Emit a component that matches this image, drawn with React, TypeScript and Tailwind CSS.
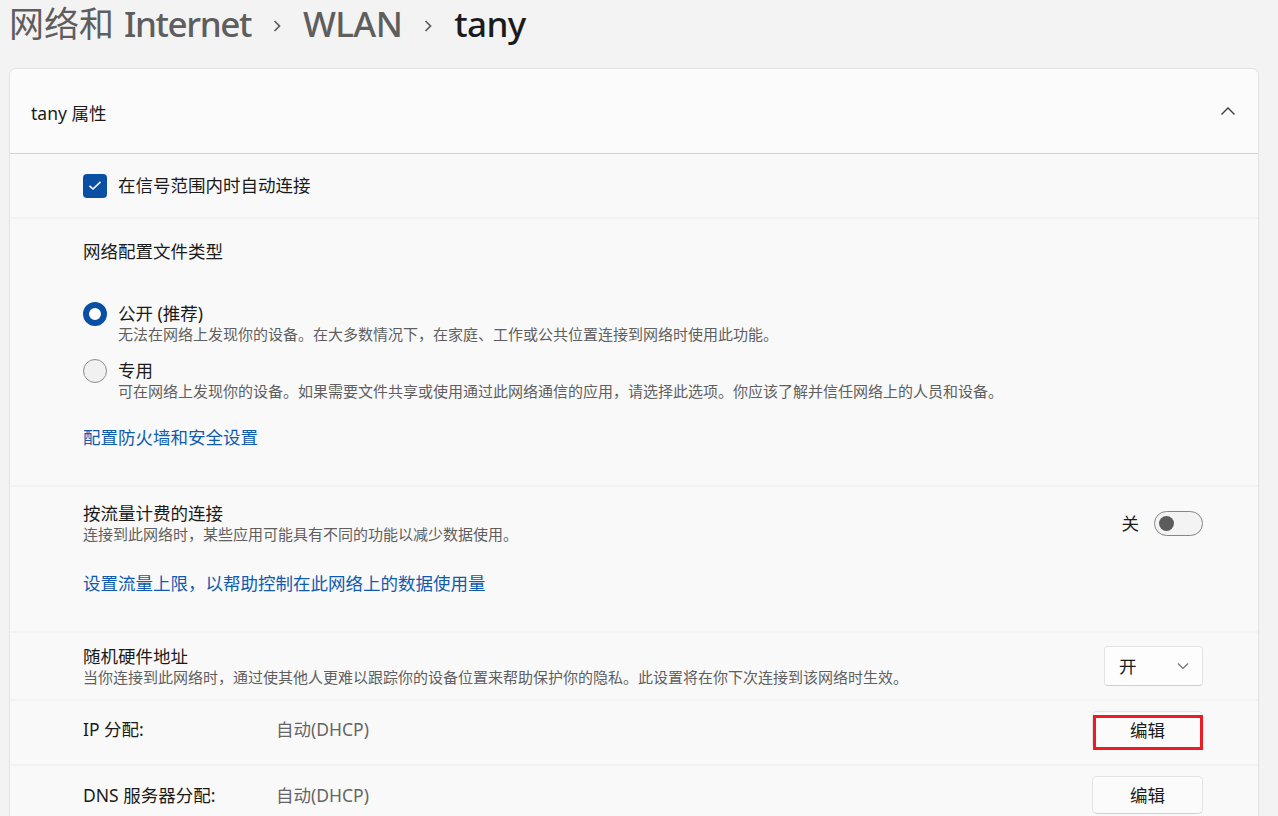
import React from "react";

const FONT = {
  fontFamily: '"Segoe UI", "Noto Sans", "Noto Sans CJK SC", sans-serif',
};

const Crumb = () => (
  <svg width="12" height="16" viewBox="0 0 12 16" className="mx-[20px] mt-[4px]">
    <path d="M3.5 3 L8.5 8 L3.5 13" fill="none" stroke="#5c5c5c" strokeWidth="1.7" />
  </svg>
);

const Row = ({
  className = "",
  children,
}: {
  className?: string;
  children?: React.ReactNode;
}) => (
  <div className={`bg-[#f9f9f9] pl-[73px] pr-[55px] ${className}`}>{children}</div>
);

const EditButton = ({ marked }: { marked?: boolean }) => (
  <div className="relative">
    <button className="w-[111px] h-[38px] rounded-[5px] border border-[#e3e3e3] border-b-[#d0d0d0] bg-[#fbfbfb] text-[17.5px] text-[#1b1b1b]">
      编辑
    </button>
    {marked && (
      <div className="absolute left-[1px] right-0 top-[4px] bottom-[-1px] border-[3px] border-[#ed1c24]" />
    )}
  </div>
);

export default function App() {
  return (
    <div
      style={FONT}
      className="w-[1278px] h-[816px] overflow-hidden bg-[#f3f3f3] text-[#1b1b1b]"
    >
      <div className="h-[68px] pl-[9px] flex items-start pt-[1px] text-[35px] leading-[46px] font-medium tracking-[-0.6px]">
        <span className="text-[#5e5e5e] font-normal tracking-normal">网络和</span>
        <span className="text-[#5e5e5e] ml-[10px] tracking-[-1.4px]">Internet</span>
        <div className="flex items-center h-[46px]">
          <Crumb />
        </div>
        <span className="text-[#5e5e5e]">WLAN</span>
        <div className="flex items-center h-[46px]">
          <Crumb />
        </div>
        <span className="text-[#1b1b1b]">tany</span>
      </div>

      <div className="ml-[9px] w-[1250px] border border-[#e2e2e2] rounded-t-[7px] overflow-hidden">
        <div className="h-[85px] pt-[4px] bg-[#fbfbfb] border-b border-[#d2d2d2] flex items-center justify-between pl-[21px] pr-[22px]">
          <span className="text-[17.5px]">tany 属性</span>
          <svg width="16" height="10" viewBox="0 0 16 10" className="mb-[4px]">
            <path d="M1.5 8.5 L8 2 L14.5 8.5" fill="none" stroke="#3a3a3a" strokeWidth="1.3" />
          </svg>
        </div>

        <div className="flex flex-col gap-[2px] bg-[#f3f3f3]">
          <Row className="h-[63px] flex items-center">
            <div className="w-[24px] h-[24px] rounded-[4px] bg-[#0b4fa4] flex items-center justify-center">
              <svg width="14" height="11" viewBox="0 0 14 11">
                <path d="M1.5 5.8 L5 9 L12.5 1.8" fill="none" stroke="#fff" strokeWidth="1.6" />
              </svg>
            </div>
            <span className="ml-[11px] text-[17.5px]">在信号范围内时自动连接</span>
          </Row>

          <Row className="h-[266px] pt-[20px]">
            <div className="text-[17.5px] leading-[24px]">网络配置文件类型</div>
            <div className="mt-[39px] flex">
              <div className="w-[24px] h-[24px] rounded-full border-[6px] border-[#0b4fa4] bg-white" />
              <div className="ml-[11px]">
                <div className="text-[17.5px] leading-[22px]">公开 (推荐)</div>
                <div className="text-[15px] leading-[20px] text-[#5f5f5f]">
                  无法在网络上发现你的设备。在大多数情况下，在家庭、工作或公共位置连接到网络时使用此功能。
                </div>
              </div>
            </div>
            <div className="mt-[15px] flex">
              <div className="w-[24px] h-[24px] rounded-full border border-[#8c8c8c] bg-[#f1f1f1]" />
              <div className="ml-[11px]">
                <div className="text-[17.5px] leading-[22px]">专用</div>
                <div className="text-[15px] leading-[20px] text-[#5f5f5f]">
                  可在网络上发现你的设备。如果需要文件共享或使用通过此网络通信的应用，请选择此选项。你应该了解并信任网络上的人员和设备。
                </div>
              </div>
            </div>
            <div className="mt-[25px] text-[17.5px] leading-[22px] text-[#0f5bb0]">
              配置防火墙和安全设置
            </div>
          </Row>

          <Row className="h-[144px] pt-[15px]">
            <div className="flex items-center justify-between">
              <div>
                <div className="text-[17.5px] leading-[22px]">按流量计费的连接</div>
                <div className="text-[15px] leading-[20px] text-[#5f5f5f]">
                  连接到此网络时，某些应用可能具有不同的功能以减少数据使用。
                </div>
              </div>
              <div className="flex items-center">
                <span className="text-[17.5px] mr-[15px]">关</span>
                <div className="w-[49px] h-[25px] rounded-full border border-[#858585] bg-[#f3f3f3] flex items-center pl-[4px]">
                  <div className="w-[15px] h-[15px] rounded-full bg-[#5c5c5c]" />
                </div>
              </div>
            </div>
            <div className="mt-[28px] text-[17.5px] leading-[22px] text-[#0f5bb0]">
              设置流量上限，以帮助控制在此网络上的数据使用量
            </div>
          </Row>

          <Row className="h-[66px] flex items-center justify-between">
            <div>
              <div className="text-[17.5px] leading-[22px]">随机硬件地址</div>
              <div className="text-[15px] leading-[20px] text-[#5f5f5f]">
                当你连接到此网络时，通过使其他人更难以跟踪你的设备位置来帮助保护你的隐私。此设置将在你下次连接到该网络时生效。
              </div>
            </div>
            <div className="w-[99px] h-[40px] rounded-[4px] border border-[#e3e3e3] border-b-[#cfcfcf] bg-[#fdfdfd] flex items-center justify-between pl-[14px] pr-[13px]">
              <span className="text-[17.5px]">开</span>
              <svg width="12" height="8" viewBox="0 0 12 8">
                <path d="M1 1.5 L6 6.5 L11 1.5" fill="none" stroke="#6a6a6a" strokeWidth="1.1" />
              </svg>
            </div>
          </Row>

          <Row className="h-[63px] flex items-start pt-[10px]">
            <span className="w-[193px] text-[17.5px] leading-[22px] mt-[7px]">IP 分配:</span>
            <span className="flex-1 text-[17.5px] leading-[22px] text-[#666666] mt-[7px]">自动(DHCP)</span>
            <EditButton marked />
          </Row>

          <Row className="h-[80px] flex items-start pt-[10px]">
            <span className="w-[193px] text-[17.5px] leading-[22px] mt-[8px]">DNS 服务器分配:</span>
            <span className="flex-1 text-[17.5px] leading-[22px] text-[#666666] mt-[8px]">自动(DHCP)</span>
            <EditButton />
          </Row>
        </div>
      </div>
    </div>
  );
}
